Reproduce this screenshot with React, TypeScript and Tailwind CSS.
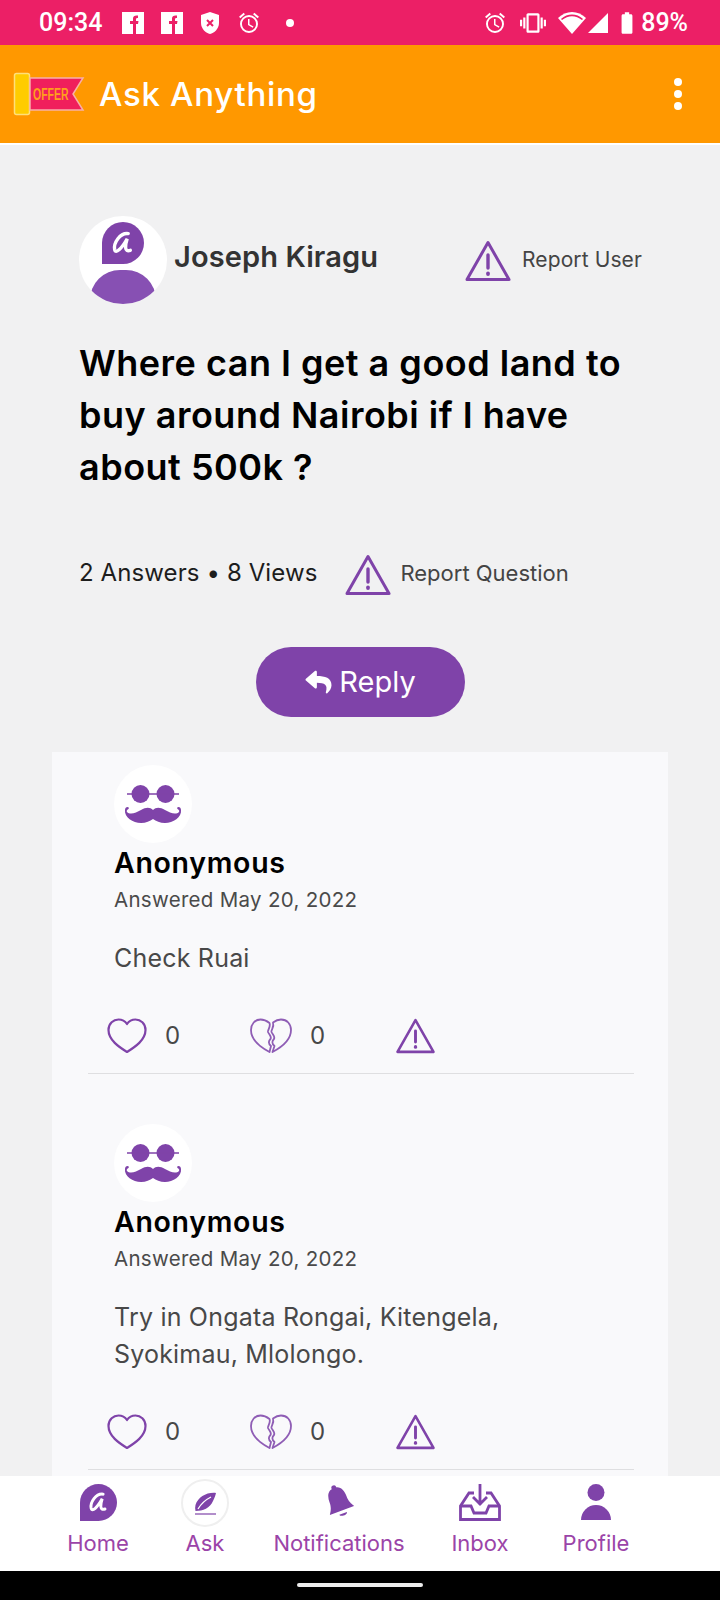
import React from "react";
import { FaReply } from "react-icons/fa";
import { MdSignalCellular4Bar, MdBatteryFull, MdVibration, MdOutlineAlarm } from "react-icons/md";

const PURPLE = "#7f43a9";

function WarnIcon({ className }: any) {
  return (
    <svg viewBox="0 0 46 42" className={className} fill="none" stroke={PURPLE} strokeWidth="3" strokeLinejoin="round" strokeLinecap="round">
      <path d="M23 2.5 L44 39.5 L2 39.5 Z" />
      <path d="M23 15 L23 28" strokeWidth="3.4" />
      <path d="M23 33.5 L23 34" strokeWidth="3.8" />
    </svg>
  );
}

function LogoBubble({ className }: any) {
  return (
    <svg viewBox="0 0 40 40" className={className}>
      <path d="M0 40 L0 20 A20 20 0 1 1 20 40 Z" fill={PURPLE} />
      <path d="M25 11 C17 10 11 20 12 26 C13 31 19 25 24 16 C22 22 21 29 27 27" fill="none" stroke="#fff" strokeWidth="3.2" strokeLinecap="round" />
    </svg>
  );
}

function Mustache() {
  return (
    <svg viewBox="0 0 60 40" className="w-[60px] h-[40px]">
      <circle cx="17.5" cy="10" r="9" fill={PURPLE} />
      <circle cx="42.5" cy="10" r="9" fill={PURPLE} />
      <path d="M4 10 H56" stroke={PURPLE} strokeWidth="1.5" />
      <path d="M2 26 C2 23 5 22 6 24 C5 26 3 26 4 28 C7 31 13 29 18 26 C23 23 27 23 30 26 C33 23 37 23 42 26 C47 29 53 31 56 28 C57 26 55 26 54 24 C55 22 58 23 58 26 C59 33 50 39 42 39 C37 39 33 37 30 35 C27 37 23 39 18 39 C10 39 1 33 2 26 Z" fill={PURPLE} />
    </svg>
  );
}

function HeartIcon() {
  return (
    <svg viewBox="0 0 40 36" className="w-[40px] h-[36px]" fill="none" stroke={PURPLE} strokeWidth="2.2" strokeLinejoin="round">
      <path d="M20 34 C12 29 1.5 22 1.5 12 C1.5 5.5 6.5 1.5 11.5 1.5 C15 1.5 18 3 20 6 C22 3 25 1.5 28.5 1.5 C33.5 1.5 38.5 5.5 38.5 12 C38.5 22 28 29 20 34 Z" />
    </svg>
  );
}

function BrokenHeartIcon() {
  return (
    <svg viewBox="0 0 42 36" className="w-[42px] h-[36px]" fill="none" stroke="#8f5db5" strokeWidth="1.8" strokeLinejoin="round">
      <path d="M19.5 5 C17 3 14 1.5 10.5 1.5 C5 1.5 1 6 1 12 C1 21 10 29 19.5 34 L21 28 C18 25.5 18.5 23 20.5 21 C22 18.5 19 16.5 18 14 C17.5 11.5 21 9 19.5 5 Z" />
      <path d="M23 4.5 C25 3 28 1.5 31 1.5 C37 1.5 41 6 41 12 C41 21 32 29 22.5 34 L24.5 28 C21.5 25.5 22 23 24 21 C25.5 18.5 22.5 16.5 21.5 14 C21 11.5 24.5 9 23 4.5 Z" />
    </svg>
  );
}

function FbIcon() {
  return (
    <svg viewBox="0 0 22 24" className="w-[22px] h-[24px]">
      <rect x="0" y="1" width="22" height="22" fill="#fff" />
      <path d="M11 23 V13 H8 V10 H11 V7.5 C11 5 13 4 16 4.5 V7 C14.5 7 14 7.3 14 8.5 V10 H16.5 L16 13 H14 V23 Z" fill="#ec1f66" />
    </svg>
  );
}

function AnswerCard({ lines }: any) {
  return (
    <div className="flex flex-col">
      <div className="pl-[62px] flex flex-col">
        <div className="w-[78px] h-[78px] rounded-full bg-white flex items-center justify-center">
          <Mustache />
        </div>
        <div className="text-[28.5px] leading-[38px] font-semibold text-black mt-[1px] tracking-[0.7px]">Anonymous</div>
        <div className="text-[20.5px] leading-[28px] text-[#4a4a4a] mt-[4px] tracking-[0.3px]">Answered May 20, 2022</div>
        <div className="text-[25px] leading-[37px] text-[#484848] mt-[26px] mb-[37px] w-[500px] tracking-[0.2px]">
          {lines.map((l: string) => (
            <div key={l}>{l}</div>
          ))}
        </div>
      </div>
      <div className="pl-[55px] flex items-center h-[44px] text-[24px] text-[#484848]">
        <HeartIcon />
        <span className="ml-[18px] w-[85px]">0</span>
        <BrokenHeartIcon />
        <span className="ml-[18px] w-[85px]">0</span>
        <WarnIcon className="w-[41px] h-[36px]" />
      </div>
      <div className="ml-[36px] mr-[34px] mt-[15px] h-[1px] bg-[#dfdfe1]" />
    </div>
  );
}

function NavItem({ icon, label, className }: any) {
  return (
    <div className={`flex flex-col items-center ${className}`}>
      <div className="h-[49px] flex items-start justify-center">{icon}</div>
      <div className="text-[22px] leading-[30px] text-[#9b44a8]">{label}</div>
    </div>
  );
}

export default function App() {
  return (
    <div className="w-[720px] h-[1600px] flex flex-col overflow-hidden bg-[#f1f1f2] font-['Inter',sans-serif]">
      {/* status bar */}
      <div className="h-[45px] bg-[#ec1f66] flex items-center text-white pl-[39px] pr-[32px] font-['Roboto',sans-serif] shrink-0">
        <span className="text-[25px] font-medium">09:34</span>
        <div className="flex items-center gap-[17px] ml-[20px]">
          <FbIcon />
          <FbIcon />
          <svg viewBox="0 0 20 24" className="w-[20px] h-[24px]">
            <path d="M10 1 L19 4 V12 C19 18 14 22 10 23 C6 22 1 18 1 12 V4 Z" fill="#fff" />
            <path d="M7 9 L13 15 M13 9 L7 15" stroke="#ec1f66" strokeWidth="2" />
          </svg>
          <MdOutlineAlarm className="w-[24px] h-[24px]" />
          <span className="w-[8px] h-[8px] rounded-full bg-white ml-[8px]" />
        </div>
        <div className="flex items-center ml-auto">
          <MdOutlineAlarm className="w-[24px] h-[24px]" />
          <MdVibration className="w-[26px] h-[26px] ml-[13px]" />
          <svg viewBox="0 0 28 22" className="w-[28px] h-[22px] ml-[12px]">
            <path d="M14 22 L0 6 C8 -2 20 -2 28 6 Z" fill="#fff" />
            <path d="M3.5 7.5 C10 2 18 2 24.5 7.5" fill="none" stroke="#ec1f66" strokeWidth="1.6" />
          </svg>
          <MdSignalCellular4Bar className="w-[24px] h-[24px]" />
          <MdBatteryFull className="w-[26px] h-[28px] ml-[4px]" />
          <span className="text-[25px] font-medium ml-[1px]">89%</span>
        </div>
      </div>

      {/* app bar */}
      <div className="h-[100px] bg-[#ff9800] flex items-center pl-[13px] pr-[38px] border-b-2 border-b-white shrink-0">
        <svg viewBox="0 0 72 44" className="w-[72px] h-[44px]">
          <rect x="1.5" y="1.5" width="15" height="41" rx="2" fill="#ffcc00" stroke="#ffdf7a" strokeWidth="1.5" />
          <path d="M17 6 H70 L60 22 L70 38 H17 Z" fill="#f01f5c" stroke="#f7b0a8" strokeWidth="1.5" />
          <text transform="translate(20 28) scale(0.62 1)" fontSize="17" fontWeight="700" fill="#ff9f1c" fontFamily="Liberation Sans, sans-serif">OFFER</text>
        </svg>
        <span className="ml-[14px] mt-[1px] text-[33px] text-white font-medium tracking-[0.7px]">Ask Anything</span>
        <div className="ml-auto flex flex-col gap-[4px]">
          <span className="w-[8px] h-[8px] rounded-full bg-white" />
          <span className="w-[8px] h-[8px] rounded-full bg-white" />
          <span className="w-[8px] h-[8px] rounded-full bg-white" />
        </div>
      </div>

      {/* content */}
      <div className="flex-1 overflow-hidden flex flex-col pt-[71px] min-h-0">
        <div className="pl-[79px] flex items-start">
          <div className="w-[88px] h-[88px] rounded-full bg-white overflow-hidden flex flex-col items-center">
            <LogoBubble className="w-[42px] h-[42px] mt-[6px] shrink-0" />
            <div className="w-[66px] h-[60px] rounded-full bg-[#8750b3] mt-[6px] shrink-0" />
          </div>
          <span className="ml-[7px] mt-[21px] text-[29px] leading-[40px] font-semibold text-[#333333] tracking-[0.1px]">Joseph Kiragu</span>
          <WarnIcon className="w-[46px] h-[42px] ml-[87px] mt-[24px]" />
          <span className="ml-[11px] mt-[28px] text-[21px] leading-[32px] text-[#444444] tracking-[0.1px]">Report User</span>
        </div>

        <div className="pl-[79px] mt-[33px] w-[680px] text-[36px] leading-[52px] font-semibold text-black tracking-[0.5px]">
          <div>Where can I get a good land to</div>
          <div>buy around Nairobi if I have</div>
          <div>about 500k ?</div>
        </div>

        <div className="pl-[79px] mt-[57px] flex items-center">
          <span className="text-[24px] leading-[36px] text-[#1d1d1d] tracking-[0.1px]">2 Answers • 8 Views</span>
          <WarnIcon className="w-[46px] h-[42px] ml-[28px] mt-[4px]" />
          <span className="ml-[9px] text-[22px] leading-[32px] text-[#444444]">Report Question</span>
        </div>

        <div className="flex justify-center mt-[51px] shrink-0">
          <div className="w-[209px] h-[70px] rounded-full bg-[#7f43a9] flex items-center justify-center text-white text-[29px]">
            <FaReply className="w-[29px] h-[26px] mr-[6px]" />
            Reply
          </div>
        </div>

        <div className="mx-[52px] w-[616px] mt-[35px] bg-[#f9f9fb] pt-[13px] flex flex-col gap-[50px] flex-1 min-h-0">
          <AnswerCard lines={["Check Ruai"]} />
          <AnswerCard lines={["Try in Ongata Rongai, Kitengela,", "Syokimau, Mlolongo."]} />
        </div>
      </div>

      {/* bottom nav */}
      <div className="h-[95px] bg-white flex items-start pt-[3px] shrink-0">
        <NavItem
          className="w-[120px] ml-[38px]"
          label="Home"
          icon={<LogoBubble className="w-[37px] h-[37px] mt-[5px]" />}
        />
        <NavItem
          className="w-[70px] ml-[12px]"
          label="Ask"
          icon={
            <div className="w-[48px] h-[48px] rounded-full border-2 border-[#efefef] flex items-center justify-center">
              <svg viewBox="0 0 24 23" className="w-[24px] h-[23px]">
                <path d="M23 1 C14 0 5 5 2.5 13 C2 15 2 17 2.5 19 C10 19 17 16 20 9 C21.5 6 22.5 3 23 1 Z" fill={PURPLE} />
                <path d="M5 17 C8 12 12 8 18 5" fill="none" stroke="#fff" strokeWidth="1.3" />
                <path d="M2 22 H23" stroke={PURPLE} strokeWidth="1.2" />
              </svg>
            </div>
          }
        />
        <NavItem
          className="w-[140px] ml-[29px]"
          label="Notifications"
          icon={
            <svg viewBox="0 0 30 36" className="w-[30px] h-[36px] mt-[5px]">
              <g transform="rotate(-20 15 18)">
                <circle cx="15" cy="3" r="2.5" fill={PURPLE} />
                <path d="M15 3 C22 3 24 9 24 15 C24 21 26 24 28 27 H2 C4 24 6 21 6 15 C6 9 8 3 15 3 Z" fill={PURPLE} />
                <path d="M11 30 H19 C19 33 11 33 11 30 Z" fill={PURPLE} />
              </g>
            </svg>
          }
        />
        <NavItem
          className="w-[100px] ml-[21px]"
          label="Inbox"
          icon={
            <svg viewBox="0 0 42 37" className="w-[42px] h-[37px] mt-[5px]" fill="none" stroke={PURPLE} strokeWidth="2.8">
              <path d="M15 9 H10 L1.5 22 V35.5 H40.5 V22 L32 9 H27" />
              <path d="M1.5 22 H12 L15 29 H27 L30 22 H40.5" />
              <path d="M21 0 V21 M14 13 L21 20 L28 13" />
            </svg>
          }
        />
        <NavItem
          className="w-[100px] ml-[16px]"
          label="Profile"
          icon={
            <svg viewBox="0 0 30 36" className="w-[30px] h-[36px] mt-[5px]">
              <circle cx="15" cy="8.5" r="8.5" fill={PURPLE} />
              <path d="M0 36 A15 15 0 0 1 30 36 Z" fill={PURPLE} />
            </svg>
          }
        />
      </div>

      {/* gesture bar */}
      <div className="h-[29px] bg-black flex items-center justify-center shrink-0">
        <div className="w-[126px] h-[4px] rounded-full bg-[#ededed] mt-[-1px]" />
      </div>
    </div>
  );
}
